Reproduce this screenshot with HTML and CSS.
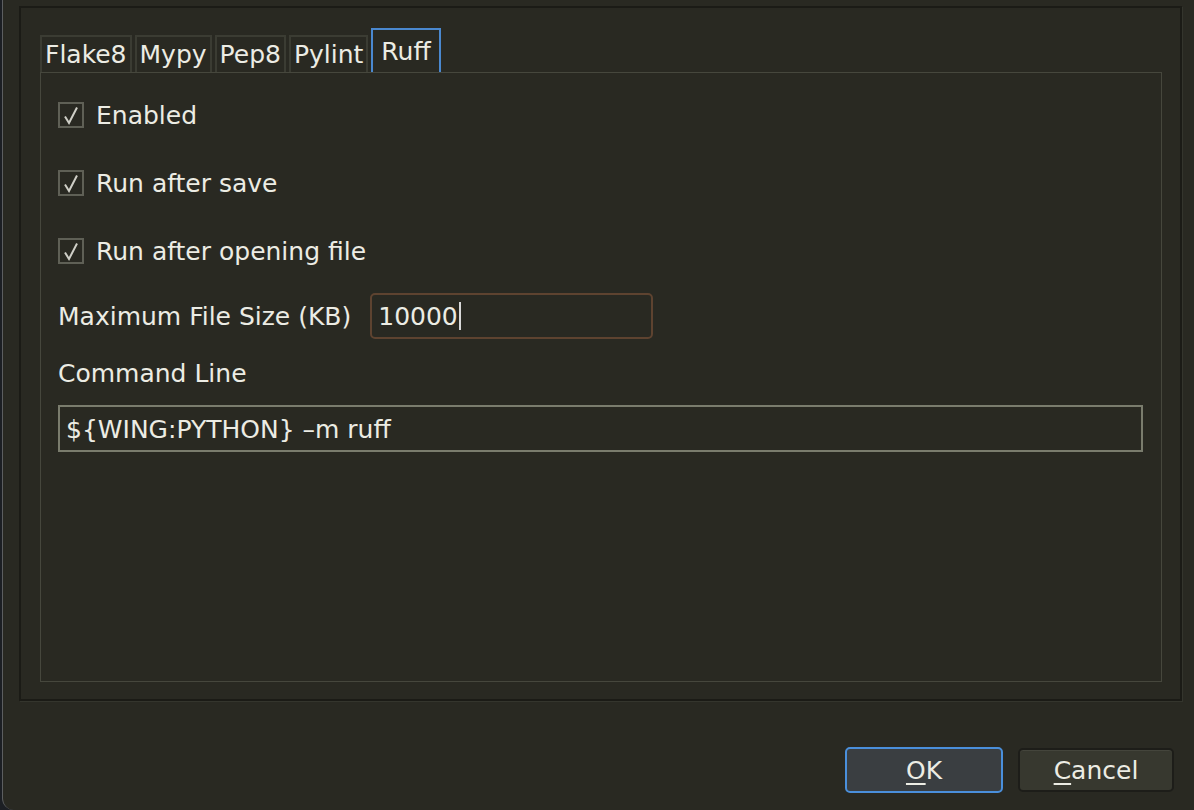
FILE: index.html
```html
<!DOCTYPE html>
<html lang="en">
<head>
  <meta charset="UTF-8" />
  <title>Preferences – Ruff</title>
  <link rel="stylesheet" href="styles.css">
</head>
<body>
  <div class="dialog">
    <div class="frame">
      <div class="tabs">
        <div class="tab">Flake8</div>
        <div class="tab">Mypy</div>
        <div class="tab">Pep8</div>
        <div class="tab">Pylint</div>
        <div class="tab active">Ruff</div>
      </div>

      <div class="pane">
        <label class="check-row">
          <span class="checkbox">
            <svg width="22" height="22" viewBox="0 0 22 22"><path d="M5 12.5 L9 19 L17 3.5" fill="none" stroke="#cfcfc7" stroke-width="2"/></svg>
          </span>
          Enabled
        </label>
        <label class="check-row">
          <span class="checkbox">
            <svg width="22" height="22" viewBox="0 0 22 22"><path d="M5 12.5 L9 19 L17 3.5" fill="none" stroke="#cfcfc7" stroke-width="2"/></svg>
          </span>
          Run after save
        </label>
        <label class="check-row">
          <span class="checkbox">
            <svg width="22" height="22" viewBox="0 0 22 22"><path d="M5 12.5 L9 19 L17 3.5" fill="none" stroke="#cfcfc7" stroke-width="2"/></svg>
          </span>
          Run after opening file
        </label>

        <div class="size-row">
          <span>Maximum File Size (KB)</span>
          <div class="field focused">10000<span class="caret"></span></div>
        </div>

        <div class="cmd-label">Command Line</div>
        <div class="field cmd">${WING:PYTHON} –m ruff</div>
      </div>
    </div>

    <div class="buttons">
      <button class="btn default"><u>O</u>K</button>
      <button class="btn"><u>C</u>ancel</button>
    </div>
  </div>
</body>
</html>
```

FILE: styles.css
```css
html, body {
  margin: 0;
  padding: 0;
  background: #1c1f24;
  overflow: hidden;
}

body {
  width: 1194px;
  height: 810px;
  font-family: "DejaVu Sans", sans-serif;
  font-size: 25px;
  color: #ecece4;
}

.dialog {
  margin-left: 2px;
  height: 810px;
  box-sizing: border-box;
  background: #292922;
  border-left: 1px solid #5c5e60;
  border-bottom-left-radius: 12px;
  padding: 6px 12px 0 16px;
}

.frame {
  height: 695px;
  box-sizing: border-box;
  border: 2px solid #1b1b16;
  box-shadow: 1px 1px 0 #34352d;
  padding: 20px 18px 17px 19px;
  display: flex;
  flex-direction: column;
}

.tabs {
  display: flex;
  align-items: flex-end;
  gap: 3px;
}

.tab {
  height: 37px;
  box-sizing: border-box;
  border: 2px solid #3b3c33;
  border-bottom: none;
  padding: 3px 3px 0 3px;
  line-height: 30px;
}

.tab.active {
  height: 44px;
  padding: 7px 8px 0 8px;
  border-color: #4a88cf;
}

.pane {
  flex: 1;
  border: 1px solid #46473d;
  padding: 29px 17px 0 17px;
  display: flex;
  flex-direction: column;
}

.check-row {
  display: flex;
  align-items: center;
  gap: 12px;
  height: 26px;
  margin-bottom: 42px;
}

.checkbox {
  width: 26px;
  height: 26px;
  box-sizing: border-box;
  border: 2px solid #5f6056;
  display: flex;
  align-items: center;
  justify-content: center;
}

.size-row {
  display: flex;
  align-items: center;
  gap: 19px;
  margin-top: -13px;
}

.field {
  box-sizing: border-box;
  height: 47px;
  line-height: 43px;
  padding: 0 6px;
  border: 2px solid #7a7c6d;
}

.field.focused {
  width: 283px;
  height: 46px;
  border-color: #5e4330;
  border-radius: 5px;
}

.caret {
  display: inline-block;
  width: 2px;
  height: 28px;
  margin-left: 1px;
  background: #d8d8d8;
  vertical-align: -5px;
}

.cmd-label {
  margin-top: 22px;
  line-height: 26px;
}

.field.cmd {
  margin-top: 18px;
  width: 1085px;
  line-height: 45px;
}

.buttons {
  display: flex;
  justify-content: flex-end;
  gap: 15px;
  margin-top: 46px;
  padding-right: 8px;
}

.btn {
  font-family: inherit;
  font-size: 25px;
  color: #ecece4;
  height: 46px;
  box-sizing: border-box;
  border-radius: 5px;
  padding: 0;
  cursor: pointer;
}

.btn u {
  text-underline-offset: 4px;
}

.btn.default {
  width: 158px;
  background: #3a3e41;
  border: 2px solid #4a8fdb;
}

.btn:not(.default) {
  width: 156px;
  height: 44px;
  margin-top: 1px;
  background: #37382f;
  border: 2px solid #1d1d19;
  box-shadow: inset 0 1px 0 #44453c;
}
```
